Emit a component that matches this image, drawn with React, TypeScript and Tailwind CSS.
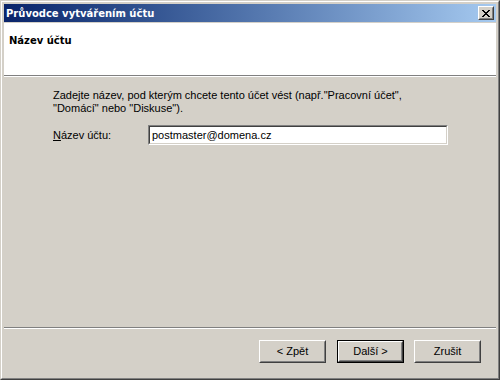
import React from "react";

function Bevel({ children, className = "" }: { children?: React.ReactNode; className?: string }) {
  return (
    <div className={"border border-t-white border-l-white border-r-[#404040] border-b-[#404040] " + className}>
      <div className="w-full h-full border border-t-[#d4d0c8] border-l-[#d4d0c8] border-r-[#808080] border-b-[#808080] flex items-center justify-center">
        {children}
      </div>
    </div>
  );
}

function CloseGlyph() {
  const rows = ["11000011", "01100110", "00111100", "00011000", "00111100", "01100110", "11000011"];
  const rects: React.ReactNode[] = [];
  rows.forEach((r, y) =>
    r.split("").forEach((c, x) => {
      if (c === "1") rects.push(<rect key={`${x}-${y}`} x={x} y={y} width={1} height={1} fill="#000" />);
    })
  );
  return (
    <svg width="8" height="7" viewBox="0 0 8 7" shapeRendering="crispEdges">
      {rects}
    </svg>
  );
}

function Button({ children, def = false }: { children: React.ReactNode; def?: boolean }) {
  if (def) {
    return (
      <div className="w-[67px] h-[23px] border border-black">
        <Bevel className="w-full h-full">{children}</Bevel>
      </div>
    );
  }
  return <Bevel className="w-[67px] h-[23px]">{children}</Bevel>;
}

export default function App() {
  return (
    <div className="w-[500px] h-[380px] font-['Liberation_Sans',Arial,sans-serif] text-[11px] leading-[13px] text-black select-none">
      <div className="w-full h-full border border-t-[#d4d0c8] border-l-[#d4d0c8] border-r-[#404040] border-b-[#404040] bg-[#d4d0c8]">
        <div className="w-full h-full border border-t-white border-l-white border-r-[#808080] border-b-[#808080] p-[2px] flex flex-col">
          {/* Title bar */}
          <div className="h-[18px] shrink-0 flex items-center justify-between bg-gradient-to-r from-[#0a246a] to-[#a6caf0] pl-[2px] pr-[2px]">
            <span className="text-white font-bold font-['DejaVu_Sans',sans-serif] text-[10px]">Průvodce vytvářením účtu</span>
            <Bevel className="w-[16px] h-[14px] bg-[#d4d0c8]">
              <CloseGlyph />
            </Bevel>
          </div>

          {/* Client */}
          <div className="mt-[1px] flex-1 flex flex-col">
            {/* Header */}
            <div className="h-[52px] shrink-0 bg-white pl-[5px] pt-[11px]">
              <span className="font-bold font-['DejaVu_Sans',sans-serif] text-[10px]">Název účtu</span>
            </div>
            <div className="h-px shrink-0 bg-[#808080]" />
            <div className="h-px shrink-0 bg-white" />

            {/* Body */}
            <div className="flex-1 pl-[49px] pt-[12px]">
              <p>
                Zadejte název, pod kterým chcete tento účet vést (např."Pracovní účet",
                <br />
                "Domácí" nebo "Diskuse").
              </p>
              <div className="mt-[10px] flex items-center">
                <label className="w-[95px]">
                  <span className="underline">N</span>ázev účtu:
                </label>
                <div className="w-[300px] h-[20px] border border-t-[#808080] border-l-[#808080] border-r-white border-b-white">
                  <div className="w-full h-full border border-t-[#404040] border-l-[#404040] border-r-[#d4d0c8] border-b-[#d4d0c8] bg-white flex items-center pl-[2px]">
                    postmaster@domena.cz
                  </div>
                </div>
              </div>
            </div>

            {/* Separator */}
            <div className="h-px shrink-0 bg-[#808080]" />
            <div className="h-px shrink-0 bg-white" />

            {/* Buttons */}
            <div className="h-[47px] shrink-0 flex justify-end items-start pt-[11px] pr-[15px]">
              <Button>&lt; Zpět</Button>
              <div className="ml-[11px]">
                <Button def>Další &gt;</Button>
              </div>
              <div className="ml-[10px]">
                <Button>Zrušit</Button>
              </div>
            </div>
          </div>
        </div>
      </div>
    </div>
  );
}
